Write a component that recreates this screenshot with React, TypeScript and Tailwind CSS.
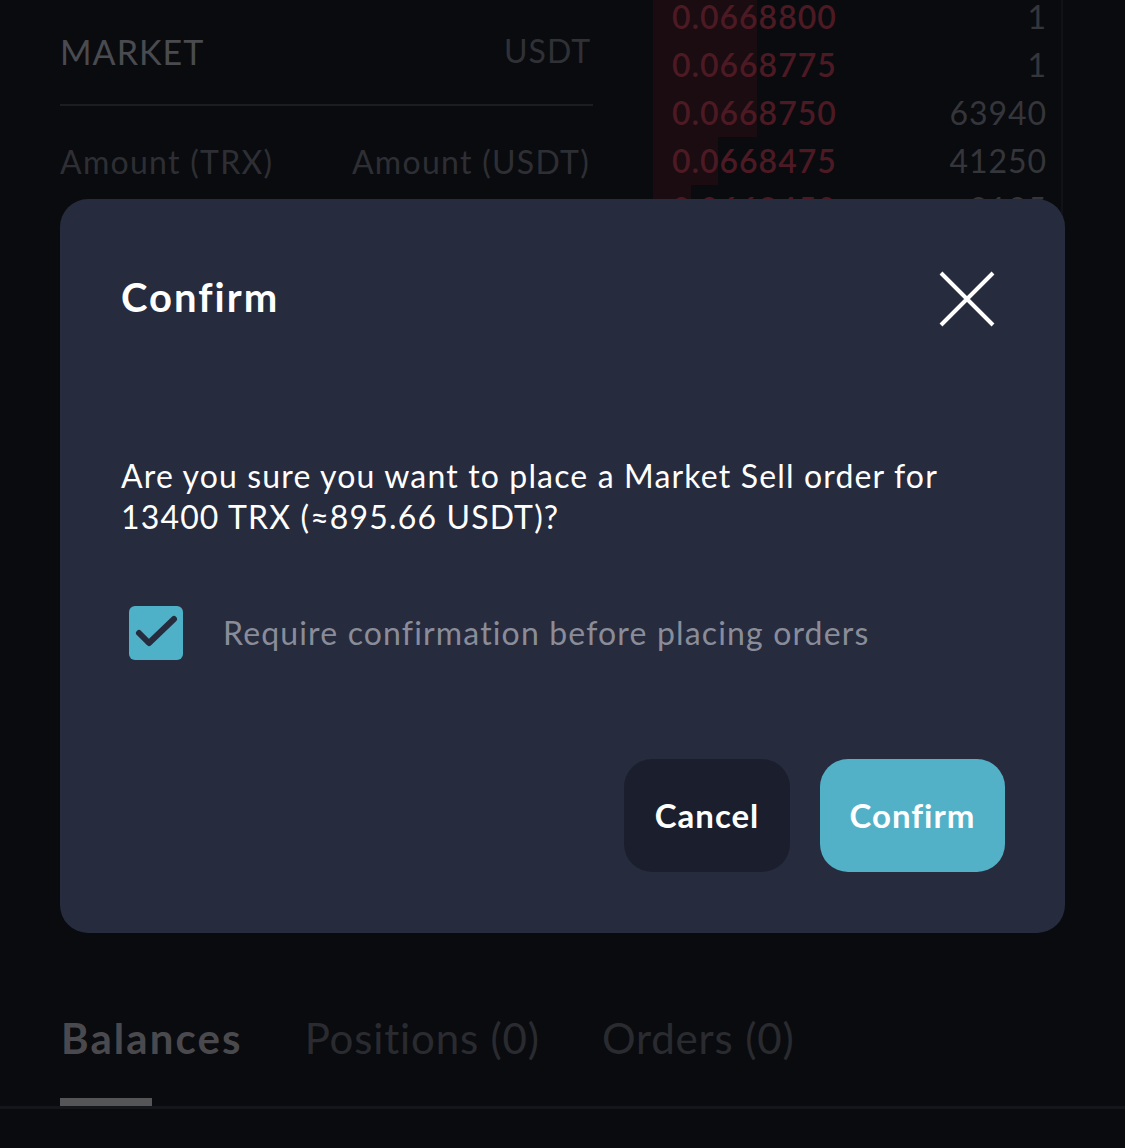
import { useState } from "react";

type Row = { price: string; qty: string; bar: number };

const asks: Row[] = [
  { price: "0.0668800", qty: "1", bar: 104 },
  { price: "0.0668775", qty: "1", bar: 104 },
  { price: "0.0668750", qty: "63940", bar: 104 },
  { price: "0.0668475", qty: "41250", bar: 65 },
  { price: "0.0668450", qty: "3125", bar: 38 },
];

function OrderBook() {
  return (
    <div className="-mt-[7px] w-[410px] border-r-2 border-[#111217]">
      {asks.map((r) => (
        <div key={r.price} className="relative flex h-[48px] items-center justify-between pl-[19px] pr-[14px]">
          <div className="absolute left-0 top-0 h-full bg-[#1a0c11]" style={{ width: r.bar }} />
          <span className="relative text-[32px] font-semibold leading-none tracking-[0.03em] text-[#4d1a24]">{r.price}</span>
          <span className="relative text-[32px] leading-none tracking-[0.03em] text-[#35363b]">{r.qty}</span>
        </div>
      ))}
    </div>
  );
}

function ConfirmModal() {
  const [checked, setChecked] = useState(true);
  return (
    <div className="absolute left-[60px] top-[199px] flex h-[734px] w-[1005px] flex-col rounded-[28px] bg-[#262b3e] pl-[61px] pr-[60px]">
      <div className="mt-[68px] flex items-center justify-between">
        <h2 className="text-[40px] font-bold leading-[52px] tracking-[0.05em] text-white">Confirm</h2>
        <button className="mr-[10px] mt-[4px] text-white">
          <svg width="56" height="56" viewBox="0 0 56 56" fill="none" stroke="currentColor" strokeWidth="4">
            <path d="M2 2L54 54M54 2L2 54" />
          </svg>
        </button>
      </div>
      <p className="mt-[128px] text-[32px] leading-[41px] tracking-[0.036em] text-white">
        Are you sure you want to place a Market Sell order for 13400 TRX (≈895.66 USDT)?
      </p>
      <label className="mt-[69px] flex items-center gap-[40px] pl-[8px]">
        <button
          onClick={() => setChecked(!checked)}
          className="flex h-[54px] w-[54px] items-center justify-center rounded-[6px] bg-[#4fb1c7]"
        >
          {checked && (
            <svg width="54" height="54" viewBox="0 0 54 54" fill="none" stroke="#262b3e" strokeWidth="6" strokeLinecap="round" strokeLinejoin="round">
              <path d="M10 27L20 37L45 13" />
            </svg>
          )}
        </button>
        <span className="text-[32px] tracking-[0.036em] text-[#8a8d99]">Require confirmation before placing orders</span>
      </label>
      <div className="mt-[99px] flex justify-end gap-[30px]">
        <button className="h-[113px] w-[166px] rounded-[28px] bg-[#1b1f2d] text-[33px] font-bold tracking-[0.03em] text-white">Cancel</button>
        <button className="h-[113px] w-[185px] rounded-[28px] bg-[#52b1c7] text-[33px] font-bold tracking-[0.03em] text-white">Confirm</button>
      </div>
    </div>
  );
}

export default function App() {
  return (
    <div className="relative h-[1148px] w-[1125px] overflow-hidden bg-[#0a0b0f]" style={{ fontFamily: "Lato, 'Noto Sans', sans-serif" }}>
      <div className="flex gap-[60px] pl-[60px]">
        <div className="w-[533px]">
          <div className="flex h-[106px] items-center justify-between border-b-2 border-[#1c1d22] pb-[2px]">
            <span className="text-[34px] tracking-[0.03em] text-[#4a4b50]">MARKET</span>
            <span className="pr-[2px] text-[32px] tracking-[0.03em] text-[#303136]">USDT</span>
          </div>
          <div className="mt-[32px] flex justify-between pr-[3px]">
            <span className="text-[32px] tracking-[0.04em] text-[#2e2f34]">Amount (TRX)</span>
            <span className="text-[32px] tracking-[0.04em] text-[#2e2f34]">Amount (USDT)</span>
          </div>
        </div>
        <OrderBook />
      </div>

      <div className="mt-[774px] flex gap-[62px] pl-[61px]">
        <span className="text-[42px] font-bold tracking-[0.05em] text-[#4a4a4e]">Balances</span>
        <span className="text-[42px] tracking-[0.02em] text-[#2a2b30]">Positions (0)</span>
        <span className="text-[42px] tracking-[0.02em] text-[#2a2b30]">Orders (0)</span>
      </div>
      <div className="mt-[28px] border-b-[3px] border-[#15161b]">
        <div className="ml-[60px] h-[8px] w-[92px] bg-[#555558]" />
      </div>

      <ConfirmModal />
    </div>
  );
}
